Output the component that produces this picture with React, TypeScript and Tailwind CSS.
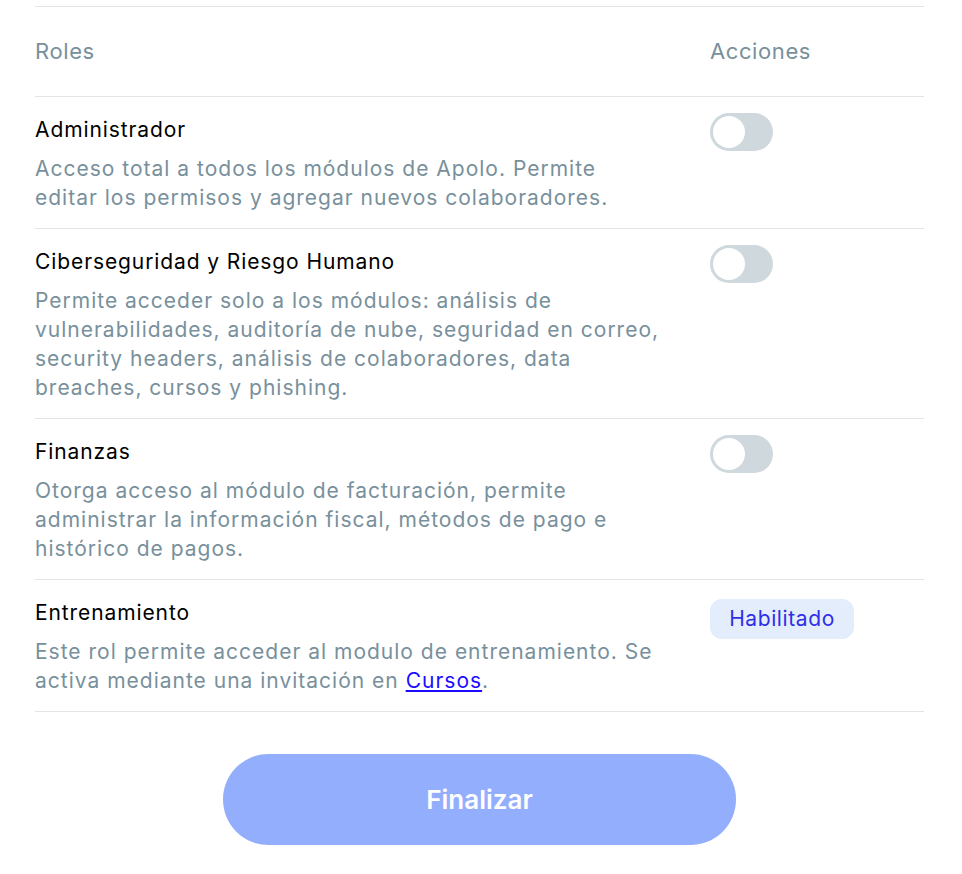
import { useState } from 'react';

interface Role {
  name: string;
  lines: React.ReactNode[];
  kind: 'toggle' | 'badge';
}

const roles: Role[] = [
  {
    name: 'Administrador',
    lines: ['Acceso total a todos los módulos de Apolo. Permite', 'editar los permisos y agregar nuevos colaboradores.'],
    kind: 'toggle',
  },
  {
    name: 'Ciberseguridad y Riesgo Humano',
    lines: [
      'Permite acceder solo a los módulos: análisis de',
      'vulnerabilidades, auditoría de nube, seguridad en correo,',
      'security headers, análisis de colaboradores, data',
      'breaches, cursos y phishing.',
    ],
    kind: 'toggle',
  },
  {
    name: 'Finanzas',
    lines: [
      'Otorga acceso al módulo de facturación, permite',
      'administrar la información fiscal, métodos de pago e',
      'histórico de pagos.',
    ],
    kind: 'toggle',
  },
  {
    name: 'Entrenamiento',
    lines: [
      'Este rol permite acceder al modulo de entrenamiento. Se',
      <>
        activa mediante una invitación en{' '}
        <a href="#" className="text-[#1a0dff] underline underline-offset-2">
          Cursos
        </a>
        .
      </>,
    ],
    kind: 'badge',
  },
];

function Toggle() {
  const [on, setOn] = useState(false);
  return (
    <button
      onClick={() => setOn(!on)}
      className={`w-[63px] h-[38px] rounded-full p-[3px] flex transition-colors ${on ? 'bg-[#93aefd] justify-end' : 'bg-[#cfd8dd] justify-start'}`}
    >
      <span className="w-8 h-8 rounded-full bg-white block" />
    </button>
  );
}

export default function App() {
  return (
    <div className="bg-white min-h-[874px] pt-[6px] font-['Inter',sans-serif]">
      <div className="ml-[35px] w-[889px]">
        <div className="grid grid-cols-[675px_1fr] h-[91px] items-center border-t border-b border-[#e2e4e6] text-[22px] text-[#78909c] tracking-[0.6px]">
          <span>Roles</span>
          <span>Acciones</span>
        </div>

        {roles.map((role) => (
          <div key={role.name} className="grid grid-cols-[675px_1fr] pt-5 pb-[16px] border-b border-[#e2e4e6]">
            <div>
              <div className="text-[21px] leading-[26px] text-black tracking-[0.9px]">{role.name}</div>
              <p className="mt-[11px] text-[21px] leading-[29px] text-[#78909c] tracking-[1px]">
                {role.lines.map((line, i) => (
                  <span key={i} className="block whitespace-nowrap">
                    {line}
                  </span>
                ))}
              </p>
            </div>
            <div className={role.kind === 'toggle' ? '-mt-[4px]' : '-mt-[1px]'}>
              {role.kind === 'toggle' ? (
                <Toggle />
              ) : (
                <span className="inline-flex items-center justify-center w-[144px] h-[40px] rounded-xl bg-[#e3edfc] text-[#2f2fe6] text-[21px] tracking-[0.6px]">
                  Habilitado
                </span>
              )}
            </div>
          </div>
        ))}

        <div className="flex justify-center mt-[42px]">
          <button className="w-[513px] h-[91px] rounded-full bg-[#93aefd] text-white text-[26px] font-semibold">
            Finalizar
          </button>
        </div>
      </div>
    </div>
  );
}
